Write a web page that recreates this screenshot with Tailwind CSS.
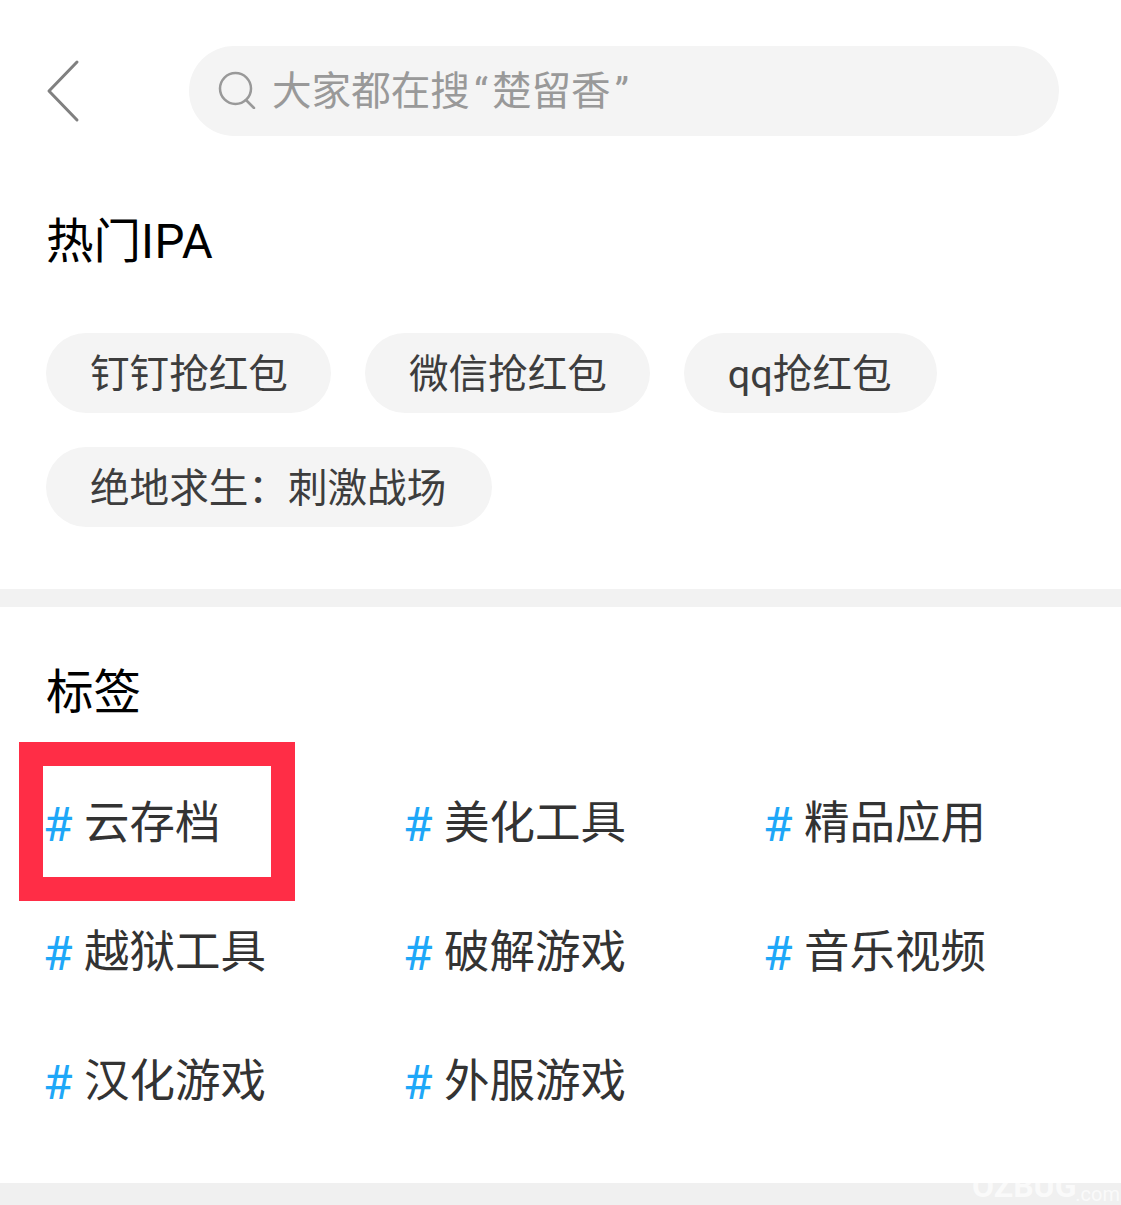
<!DOCTYPE html>
<html lang="zh-CN">

<head>
  <meta charset="UTF-8">
  <meta name="viewport" content="width=device-width, initial-scale=1.0">
  <title>搜索</title>
  <script src="https://cdn.jsdelivr.net/npm/@tailwindcss/browser@4"></script>
</head>

<body class="bg-white font-['Roboto','Noto_Sans_CJK_SC',sans-serif] overflow-hidden">
  <div class="relative w-[1121px] h-[1205px] overflow-hidden">

    <!-- Search bar -->
    <div class="flex items-center pt-[46px] pl-[46px] pr-[62px]">
      <svg class="w-[34px] h-[64px] text-[#808080] mr-[109px]" fill="none" stroke="currentColor" viewBox="0 0 34 64">
        <path stroke-width="3" stroke-linecap="round" stroke-linejoin="round" d="M31 3 L3 32 L31 61"></path>
      </svg>
      <div class="flex items-center flex-1 h-[90px] rounded-full bg-[#f4f4f4] pl-[29px]">
        <svg class="w-[38px] h-[38px] text-[#999999] mr-[16px] -mt-[2px]" fill="none" stroke="currentColor" viewBox="0 0 38 38">
          <circle cx="17.5" cy="17.5" r="15.5" stroke-width="2.5"></circle>
          <path stroke-width="2.5" stroke-linecap="round" d="M28 29 L36 37"></path>
        </svg>
        <span class="mt-[2px] text-[39.6px] leading-none text-[#999999]">大家都在搜<span class="px-[4px]">“</span>楚留香<span class="px-[4px]">”</span></span>
      </div>
    </div>

    <!-- Hot IPA -->
    <div class="px-[46px] pt-[76px]">
      <h2 class="text-[47.5px] leading-[60px] font-normal text-black">热门<span class="tracking-[0.5px]">IPA</span></h2>
      <div class="flex flex-wrap gap-[34px] mt-[61px] w-[960px]">
        <span class="h-[80px] pl-[44px] pr-[43px] pt-[4px] flex items-center rounded-full bg-[#f4f4f4] text-[39.6px] text-[#3d3d3d]">钉钉抢红包</span>
        <span class="h-[80px] pl-[44px] pr-[43px] pt-[4px] flex items-center rounded-full bg-[#f4f4f4] text-[39.6px] text-[#3d3d3d]">微信抢红包</span>
        <span class="h-[80px] pl-[44px] pr-[45px] pt-[4px] flex items-center rounded-full bg-[#f4f4f4] text-[39.6px] text-[#3d3d3d]">qq抢红包</span>
        <span class="h-[80px] pl-[44px] pr-[46px] pt-[4px] flex items-center rounded-full bg-[#f4f4f4] text-[39.6px] text-[#3d3d3d]">绝地求生：刺激战场</span>
      </div>
    </div>

    <div class="h-[18px] bg-[#f2f2f2] mt-[62px]"></div>

    <!-- Tags -->
    <div class="px-[46px] pt-[56px]">
      <h2 class="text-[47.5px] leading-[60px] font-normal text-black">标签</h2>
      <div class="grid grid-cols-[360px_360px_1fr] auto-rows-[129px] mt-[36px] text-[45.5px] text-[#333333]">
        <div class="flex items-center pt-[2px]"><span class="w-[38px] -ml-[3px] mr-[3px] text-[48px] text-[#1ea7f8]">#</span>云存档</div>
        <div class="flex items-center pt-[2px]"><span class="w-[38px] -ml-[3px] mr-[3px] text-[48px] text-[#1ea7f8]">#</span>美化工具</div>
        <div class="flex items-center pt-[2px]"><span class="w-[38px] -ml-[3px] mr-[3px] text-[48px] text-[#1ea7f8]">#</span>精品应用</div>
        <div class="flex items-center pt-[2px]"><span class="w-[38px] -ml-[3px] mr-[3px] text-[48px] text-[#1ea7f8]">#</span>越狱工具</div>
        <div class="flex items-center pt-[2px]"><span class="w-[38px] -ml-[3px] mr-[3px] text-[48px] text-[#1ea7f8]">#</span>破解游戏</div>
        <div class="flex items-center pt-[2px]"><span class="w-[38px] -ml-[3px] mr-[3px] text-[48px] text-[#1ea7f8]">#</span>音乐视频</div>
        <div class="flex items-center pt-[2px]"><span class="w-[38px] -ml-[3px] mr-[3px] text-[48px] text-[#1ea7f8]">#</span>汉化游戏</div>
        <div class="flex items-center pt-[2px]"><span class="w-[38px] -ml-[3px] mr-[3px] text-[48px] text-[#1ea7f8]">#</span>外服游戏</div>
      </div>
    </div>

    <!-- Annotation over the first tag -->
    <div class="absolute left-[19px] top-[742px] w-[276px] h-[159px] border-[24px] border-[#ff2d46]"></div>

    <!-- Bottom band with watermark -->
    <div class="absolute left-0 right-0 top-[1183px] h-[22px] bg-[#f0f0f0] overflow-hidden">
      <span class="absolute left-[972px] top-[-13px] text-[32px] leading-none font-bold text-white/70">OZBUG</span>
      <span class="absolute right-[1px] top-[1px] text-[20px] leading-none text-white/70">.com</span>
    </div>
  </div>
</body>

</html>
